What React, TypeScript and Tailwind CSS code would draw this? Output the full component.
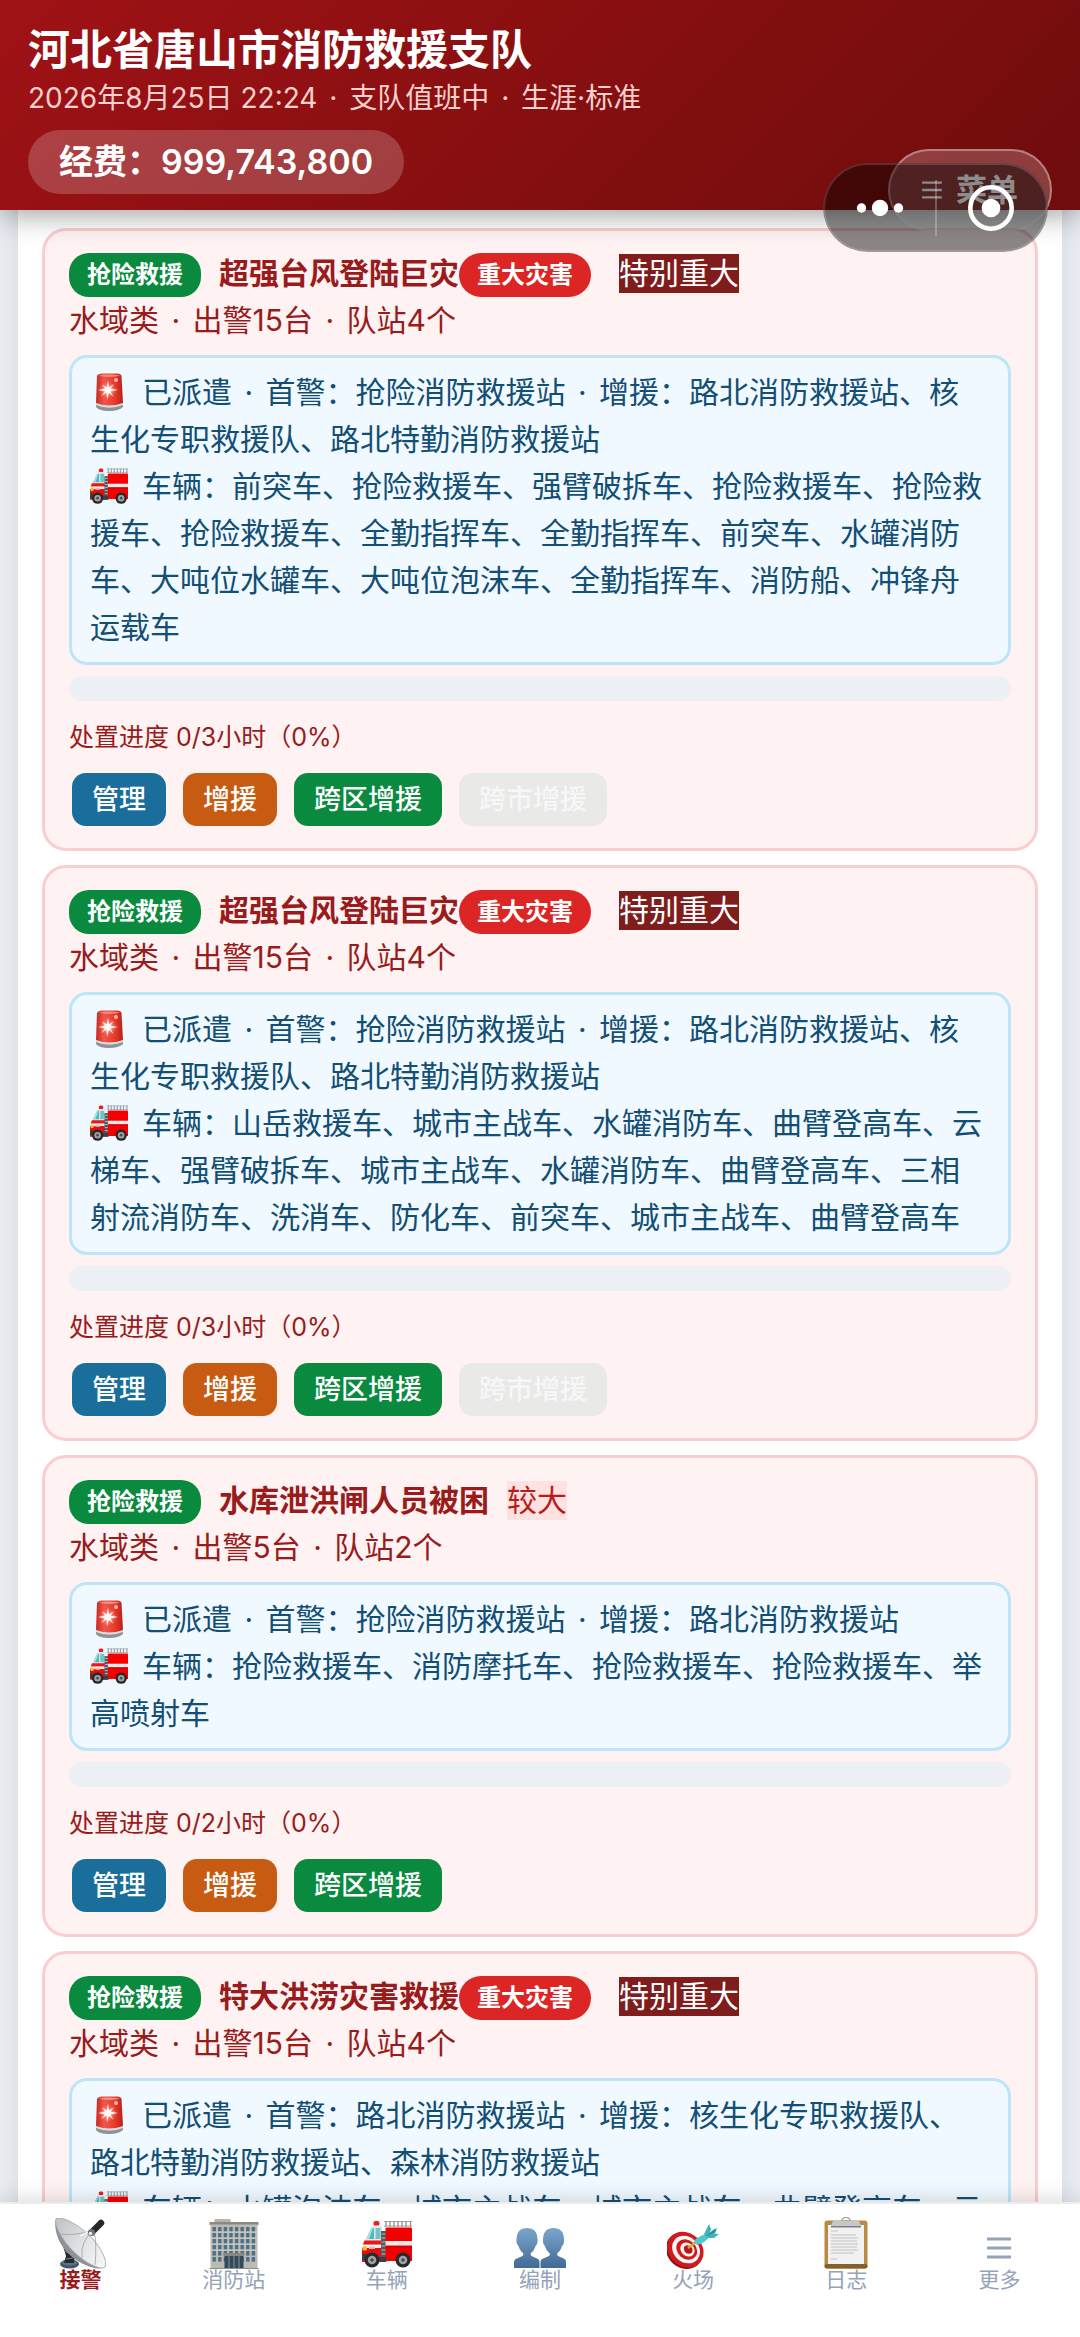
import React from "react";

type Incident = {
  title: string;
  major: boolean;
  level: string;
  trucks: number;
  stations: number;
  first: string;
  backup: string;
  vehicles: string;
  hours: number;
  crossCity: boolean;
};

const incidents: Incident[] = [
  {
    title: "超强台风登陆巨灾",
    major: true,
    level: "特别重大",
    trucks: 15,
    stations: 4,
    first: "抢险消防救援站",
    backup: "路北消防救援站、核生化专职救援队、路北特勤消防救援站",
    vehicles:
      "前突车、抢险救援车、强臂破拆车、抢险救援车、抢险救援车、抢险救援车、全勤指挥车、全勤指挥车、前突车、水罐消防车、大吨位水罐车、大吨位泡沫车、全勤指挥车、消防船、冲锋舟运载车",
    hours: 3,
    crossCity: true,
  },
  {
    title: "超强台风登陆巨灾",
    major: true,
    level: "特别重大",
    trucks: 15,
    stations: 4,
    first: "抢险消防救援站",
    backup: "路北消防救援站、核生化专职救援队、路北特勤消防救援站",
    vehicles:
      "山岳救援车、城市主战车、水罐消防车、曲臂登高车、云梯车、强臂破拆车、城市主战车、水罐消防车、曲臂登高车、三相射流消防车、洗消车、防化车、前突车、城市主战车、曲臂登高车",
    hours: 3,
    crossCity: true,
  },
  {
    title: "水库泄洪闸人员被困",
    major: false,
    level: "较大",
    trucks: 5,
    stations: 2,
    first: "抢险消防救援站",
    backup: "路北消防救援站",
    vehicles: "抢险救援车、消防摩托车、抢险救援车、抢险救援车、举高喷射车",
    hours: 2,
    crossCity: false,
  },
  {
    title: "特大洪涝灾害救援",
    major: true,
    level: "特别重大",
    trucks: 15,
    stations: 4,
    first: "路北消防救援站",
    backup: "核生化专职救援队、路北特勤消防救援站、森林消防救援站",
    vehicles: "水罐泡沫车、城市主战车、城市主战车、曲臂登高车、云梯车、抢险救援车",
    hours: 3,
    crossCity: true,
  },
];

function Siren({ className }: { className: string }) {
  return (
    <svg viewBox="0 0 38 38" className={className} aria-hidden="true">
      <defs>
        <linearGradient id="siren-glass" x1="0" x2="1" y1="0" y2="0">
          <stop offset="0" stopColor="#c8281f" />
          <stop offset="0.3" stopColor="#f0564a" />
          <stop offset="0.7" stopColor="#e83a2c" />
          <stop offset="1" stopColor="#b81f18" />
        </linearGradient>
        <radialGradient id="siren-glow">
          <stop offset="0" stopColor="#fff" />
          <stop offset="0.4" stopColor="#ffc9bd" stopOpacity="0.6" />
          <stop offset="1" stopColor="#ff7a66" stopOpacity="0" />
        </radialGradient>
      </defs>
      <path d="M6 31 Q19 36 33 31 L33 34 Q29 38 19 38 Q9 38 6 34Z" fill="#8d9296" />
      <path d="M6 30 Q19 35 33 30 L33 32 Q19 37.500 6 32Z" fill="#d9dcde" />
      <path d="M7 3 Q8 .5 12 .5 H27 Q31 .5 31.500 3 L33 30 Q19 35 6 30Z" fill="url(#siren-glass)" />
      <path d="M9 2.500 Q19 .5 30 2.500 Q19 5.500 9 2.500Z" fill="#f98a7c" />
      <circle cx="18" cy="17" r="9" fill="url(#siren-glow)" />
      <path d="M18 7 L19 14.500 L24 11 L20.500 15.500 L28 17 L20.500 18.500 L23.500 24 L19 19.500 L17 27 L16.500 19.500 L11 23 L15 18.500 L8 17 L15 15.500 L12 11.500 L16.800 14.500Z" fill="#fff" opacity="0.9" />
      <circle cx="26" cy="7" r="2" fill="#ffb0a6" />
    </svg>
  );
}

function FireTruck({ className }: { className: string }) {
  return (
    <svg viewBox="0 0 50 48" className={className} aria-hidden="true">
      <path d="M22 1.500H50M22 6H50" stroke="#a3a8ab" strokeWidth="1" />
      <path d="M24 1V7M28 1V7M32 1V7M36 1V7M40 1V7M44 1V7M48.500 1V7" stroke="#8e9498" strokeWidth="1.300" />
      <rect x="11.500" y="1" width="6" height="5" rx="2" fill="#ee1c1c" />
      <path d="M10 5.500H20V42H0V25L3.500 19.500Z" fill="#e3e7e8" />
      <path d="M9.500 8H12V19H4.500Z" fill="#53b8bd" />
      <path d="M13.500 8H18.500V19H13.500Z" fill="#6fc6ca" />
      <path d="M9.500 8H11L7 19H4.500Z" fill="#a7e2e3" />
      <path d="M2.500 20.500H20V24.500H1Z" fill="#f01414" />
      <path d="M0 27.500H20V42H0Z" fill="#e90c0c" />
      <path d="M0 25H20V28H0Z" fill="#f5f5f5" />
      <rect x="0.500" y="26" width="4.500" height="4.500" rx="1.500" fill="#ffbd3d" />
      <rect x="7" y="26.500" width="6" height="2.500" fill="#e8b8a8" />
      <path d="M0 34H6V40H0Z" fill="#3a3e41" />
      <rect x="19" y="11" width="5.500" height="31" fill="#55595d" />
      <path d="M19.500 14H24M19.500 18H24M19.500 22H24M19.500 26H24M19.500 30H24M19.500 34H24" stroke="#b8bcbf" strokeWidth="1.200" />
      <path d="M23.500 8.500Q23.500 7.500 25 7.500H49Q50 7.500 50 9V41H23.500Z" fill="#f40000" />
      <rect x="23.500" y="21" width="26.500" height="4.500" fill="#f7e9e9" />
      <path d="M23.500 27H50" stroke="#b80000" strokeWidth="0.800" />
      <path d="M14 37H24V42H14Z" fill="#3b3f43" />
      <circle cx="10" cy="40" r="7.500" fill="#26282a" />
      <circle cx="10" cy="40" r="4.300" fill="#a0a3a6" />
      <circle cx="10" cy="40" r="1.800" fill="#494c4f" />
      <circle cx="41" cy="40" r="7.500" fill="#26282a" />
      <circle cx="41" cy="40" r="4.300" fill="#a0a3a6" />
      <circle cx="41" cy="40" r="1.800" fill="#494c4f" />
    </svg>
  );
}

function Dish({ className }: { className: string }) {
  return (
    <svg viewBox="0 0 51 51" className={className} aria-hidden="true">
      <defs>
        <linearGradient id="dish-face" x1="0" x2="1" y1="0.200" y2="0.800">
          <stop offset="0" stopColor="#c3c5c9" />
          <stop offset="0.5" stopColor="#dfe1e4" />
          <stop offset="1" stopColor="#f4f5f6" />
        </linearGradient>
      </defs>
      <ellipse cx="14.500" cy="46" rx="9.500" ry="4.500" fill="#41576a" />
      <ellipse cx="14.500" cy="44.500" rx="8" ry="3" fill="#5b7488" />
      <path d="M8 28L20 36L19 45H9L11 38Z" fill="#25292d" />
      <path d="M10 33L17 37M11 41L18 40" stroke="#7b838a" strokeWidth="1" />
      <path d="M1 0C-2 12 4 28 16 38C28 48 43 53 50 49L46 42Z" fill="#8e9196" />
      <path d="M1.500 .5C9 -2 25 8 36 19C46 29 53 44 50 49C45 53 29 44 18 33C6 21 -2 5 1.500 .5Z" fill="url(#dish-face)" stroke="#a7aaae" strokeWidth="0.900" />
      <path d="M4 16Q22 18 39 12M39 12Q25 23 27 40M39 12Q42 27 40 47" stroke="#a4a7ab" strokeWidth="0.900" fill="none" />
      <path d="M25 18Q31 14 38 13" stroke="#fff" strokeWidth="1.200" fill="none" />
      <path d="M38 13L46 5" stroke="#25272a" strokeWidth="6.500" strokeLinecap="round" />
      <circle cx="36.500" cy="14.500" r="3.600" fill="#6c7074" />
      <circle cx="35.500" cy="15.500" r="1.800" fill="#e8e9ea" />
    </svg>
  );
}

function Office({ className }: { className: string }) {
  const rows = [8, 14, 20, 26, 32, 38];
  const columns = [3, 8.6, 14.2, 19.8, 25.4, 31, 36.6, 42.2];
  return (
    <svg viewBox="0 0 49 50" className={className} aria-hidden="true">
      <rect x="5" y="0" width="16" height="4" fill="#b7b4ae" />
      <rect x="0" y="3" width="49" height="3" fill="#8f8880" />
      <rect x="1" y="5.500" width="47" height="44" fill="#bdbab4" />
      {rows.map((y) =>
        columns.map((x) => <rect key={`${x}-${y}`} x={x} y={y} width="3.400" height="4.600" fill="#4b7184" />),
      )}
      <path d="M1 13H48M1 19H48M1 25H48M1 31H48" stroke="#d8d6d2" strokeWidth="0.800" />
      <rect x="14" y="34" width="21" height="3" fill="#8a8781" />
      <rect x="15" y="37" width="19" height="12.500" fill="#334a59" />
      <path d="M19.500 37V49M24.500 37V49M29.500 37V49" stroke="#8a989f" strokeWidth="1" />
      <path d="M0 49.500H49" stroke="#8e8c88" strokeWidth="1" />
    </svg>
  );
}

function People({ className }: { className: string }) {
  const bust =
    "M0 42V36Q0 33 4 32L8.500 30Q10 29 9 27Q6 25 4.500 20Q2 18 2.500 13Q3 2 13 2Q23 2 23.500 13Q24 18 21.500 20Q20 25 17 27Q16 29 17.500 30L22 32Q25.500 33 25.500 36V42Z";
  return (
    <svg viewBox="0 0 52 43" className={className} aria-hidden="true">
      <defs>
        <linearGradient id="bust-fill" x1="0" x2="0" y1="0" y2="1">
          <stop offset="0" stopColor="#7ba6cc" />
          <stop offset="1" stopColor="#416a94" />
        </linearGradient>
      </defs>
      <path d={bust} fill="url(#bust-fill)" />
      <path d={bust} fill="url(#bust-fill)" transform="translate(26.500 0)" />
    </svg>
  );
}

function Target({ className }: { className: string }) {
  return (
    <svg viewBox="0 0 52 46" className={className} aria-hidden="true">
      <g transform="rotate(42 18 27)">
        <ellipse cx="18" cy="28.500" rx="19.500" ry="16.500" fill="#8c1015" />
        <ellipse cx="18" cy="26.500" rx="19.500" ry="16.500" fill="#cf1a20" />
        <ellipse cx="18.500" cy="26" rx="15" ry="12.600" fill="#fbf5f3" />
        <ellipse cx="19" cy="25.500" rx="11.300" ry="9.300" fill="#cf1a20" />
        <ellipse cx="19.500" cy="25" rx="7.800" ry="6.400" fill="#fbf5f3" />
        <ellipse cx="20" cy="24.500" rx="4.700" ry="3.900" fill="#b9151b" />
      </g>
      <path d="M21 25L29 19" stroke="#d6a53a" strokeWidth="2.500" />
      <path d="M27 18Q30 14 39 11L42 14Q38 20 30 22Z" fill="#4ec9cb" />
      <path d="M37 11L42 1L44 6L43 10L52 11L47 15L40 15Z" fill="#3cb6ba" />
      <path d="M39 13L46 7L50 5L48 10Z" fill="#2a9398" />
    </svg>
  );
}

function Clipboard({ className }: { className: string }) {
  return (
    <svg viewBox="0 0 44 52" className={className} aria-hidden="true">
      <rect x="0.500" y="3.500" width="43" height="48" rx="3" fill="#b98a45" />
      <rect x="0.500" y="47" width="43" height="4.500" rx="2" fill="#83602c" />
      <rect x="4" y="8" width="36" height="39" fill="#f1f1f1" />
      <path d="M7 14H14M7 18H32M7 21H34M7 24H33M7 27H34M7 30H33M7 33H34M7 36H30M7 42H13" stroke="#c2c2c4" strokeWidth="1.100" />
      <path d="M22 .5Q26 .5 26 4H18Q18 .5 22 .5Z" fill="none" stroke="#9a9da1" strokeWidth="1.200" />
      <path d="M9 4H35L37 9H7Z" fill="#c5c7ca" />
      <path d="M7 9H37V10.500H7Z" fill="#7d7f83" />
    </svg>
  );
}

function Bars({ className }: { className: string }) {
  return (
    <svg viewBox="0 0 24 22" className={className} aria-hidden="true">
      <path d="M0 2H24M0 11H24M0 20H24" stroke="currentColor" strokeWidth="3" />
    </svg>
  );
}

function Dot() {
  return <span className="mx-1"> · </span>;
}

function IncidentCard({ item }: { item: Incident }) {
  return (
    <article className="rounded-3xl border-[3px] border-[#fbcdd0] bg-[#fef2f2] px-6 pt-[19px] pb-[22px] text-[30px] leading-[47px] text-[#991b1b]">
      <div className="flex items-center">
        <span className="h-11 self-end rounded-[20px] bg-[#098a3e] px-[18px] text-2xl leading-[44px] font-bold text-white">
          抢险救援
        </span>
        <h2 className="ml-[18px] font-bold">{item.title}</h2>
        {item.major && (
          <span className="mr-2.5 h-11 self-end rounded-[22px] bg-[#dc2626] px-[18px] text-2xl leading-[44px] font-bold text-white">
            重大灾害
          </span>
        )}
        {item.level === "特别重大" ? (
          <span className="ml-[18px] bg-[#7f1d1d] leading-[39px] text-white">{item.level}</span>
        ) : (
          <span className="ml-[18px] bg-[#fee2e2] leading-[39px] text-[#b91c1c]">{item.level}</span>
        )}
      </div>
      <p>
        水域类
        <Dot />
        出警{item.trucks}台
        <Dot />
        队站{item.stations}个
      </p>
      <div className="mt-[11px] rounded-[18px] border-[3px] border-[#bde5fa] bg-[#f0f9ff] py-[11px] pr-6 pl-[18px] text-[#134e74]">
        <p>
          <Siren className="mr-3.5 inline-block size-[38px] align-[-8px]" />
          已派遣
          <Dot />
          首警：{item.first}
          <Dot />
          增援：{item.backup}
        </p>
        <p>
          <FireTruck className="mr-3.5 inline-block size-[38px] align-[-8px]" />
          车辆：{item.vehicles}
        </p>
      </div>
      <div
        role="progressbar"
        aria-label="处置进度"
        aria-valuenow={0}
        aria-valuemin={0}
        aria-valuemax={100}
        className="mt-[11px] h-[25px] rounded-full bg-[#edf0f4]"
      />
      <p className="mt-4 text-[25px] leading-10">处置进度 0/{item.hours}小时（0%）</p>
      <div className="mt-4 flex gap-[17px] px-[3px] text-[27px] leading-[53px] font-medium text-white">
        <button className="rounded-[14px] bg-[#1a6e9b] px-5">管理</button>
        <button className="rounded-[14px] bg-[#c75b12] px-5">增援</button>
        <button className="rounded-[14px] bg-[#098a3e] px-5">跨区增援</button>
        {item.crossCity && (
          <button disabled className="rounded-[14px] bg-[#e9e9e8] px-5 text-[#f7f7f7]">
            跨市增援
          </button>
        )}
      </div>
    </article>
  );
}

const tabs = [
  { label: "接警", icon: <Dish className="size-[51px]" /> },
  { label: "消防站", icon: <Office className="size-[50px]" /> },
  { label: "车辆", icon: <FireTruck className="size-[50px]" /> },
  { label: "编制", icon: <People className="h-[43px] w-[52px]" /> },
  { label: "火场", icon: <Target className="h-[46px] w-[52px]" /> },
  { label: "日志", icon: <Clipboard className="h-[52px] w-[44px]" /> },
  { label: "更多", icon: <Bars className="mb-2.5 h-[22px] w-6" /> },
];

export default function App() {
  return (
    <div
      lang="zh-CN"
      className="flex h-screen flex-col overflow-hidden bg-[#e8ebf0] font-['Inter','Noto_Sans_CJK_SC',sans-serif]"
    >
      <header className="relative z-10 bg-linear-135 from-[#a01216] to-[#6f0c0c] px-7 pt-5 pb-4 text-white shadow-[0_4px_28px_rgba(0,0,0,0.4)]">
        <h1 className="text-[42px] leading-[60px] font-bold">河北省唐山市消防救援支队</h1>
        <p className="text-[28px] leading-9 text-[#fbd0cd]">
          2026年8月25日 22:24
          <Dot />
          支队值班中
          <Dot />
          生涯·标准
        </p>
        <div className="mt-3.5 w-fit rounded-full bg-white/20 px-[31px] text-[34px] leading-[64px] font-semibold">
          经费：999,743,800
        </div>
        <button className="absolute top-[149px] right-7 flex h-[82px] w-[164px] items-center justify-center gap-3.5 rounded-full border-2 border-white/35 bg-white/20 text-[31px] font-bold">
          <Bars className="h-[18px] w-5" />
          菜单
        </button>
        <div className="absolute top-[163px] right-8 flex h-[89px] w-[225px] items-center rounded-full border-2 border-white/15 bg-black/45">
          <button aria-label="更多选项" className="flex flex-1 justify-center">
            <svg viewBox="0 0 48 18" className="h-[18px] w-12" aria-hidden="true">
              <circle cx="5.500" cy="9" r="4.700" fill="#fff" />
              <circle cx="24" cy="9" r="8.200" fill="#fff" />
              <circle cx="42.500" cy="9" r="4.700" fill="#fff" />
            </svg>
          </button>
          <span className="h-14 w-0.5 bg-white/25" />
          <button aria-label="关闭" className="flex flex-1 justify-center">
            <svg viewBox="0 0 48 48" className="size-12" aria-hidden="true">
              <circle cx="24" cy="24" r="20.700" fill="none" stroke="#fff" strokeWidth="4.600" />
              <circle cx="24" cy="24" r="9.300" fill="#fff" />
            </svg>
          </button>
        </div>
      </header>

      <main className="mx-[18px] min-h-0 flex-1 overflow-hidden bg-white px-6 pt-[18px] shadow-[0_0_18px_rgba(30,41,59,0.08)]">
        <div className="flex flex-col gap-3.5">
          {incidents.map((item, index) => (
            <IncidentCard key={index} item={item} />
          ))}
        </div>
      </main>

      <nav className="relative z-10 grid grid-cols-7 border-t-2 border-[#ececec] bg-white px-1 pt-3 pb-[46px] shadow-[0_-3px_20px_rgba(0,0,0,0.14)]">
        {tabs.map((tab, index) => (
          <button
            key={tab.label}
            aria-current={index === 0 ? "page" : undefined}
            className="flex flex-col items-center text-[21px] leading-[22px] text-[#94a3b8] aria-[current=page]:font-bold aria-[current=page]:text-[#991b1b]"
          >
            <span className="flex h-[53px] items-end">{tab.icon}</span>
            {tab.label}
          </button>
        ))}
      </nav>
    </div>
  );
}
